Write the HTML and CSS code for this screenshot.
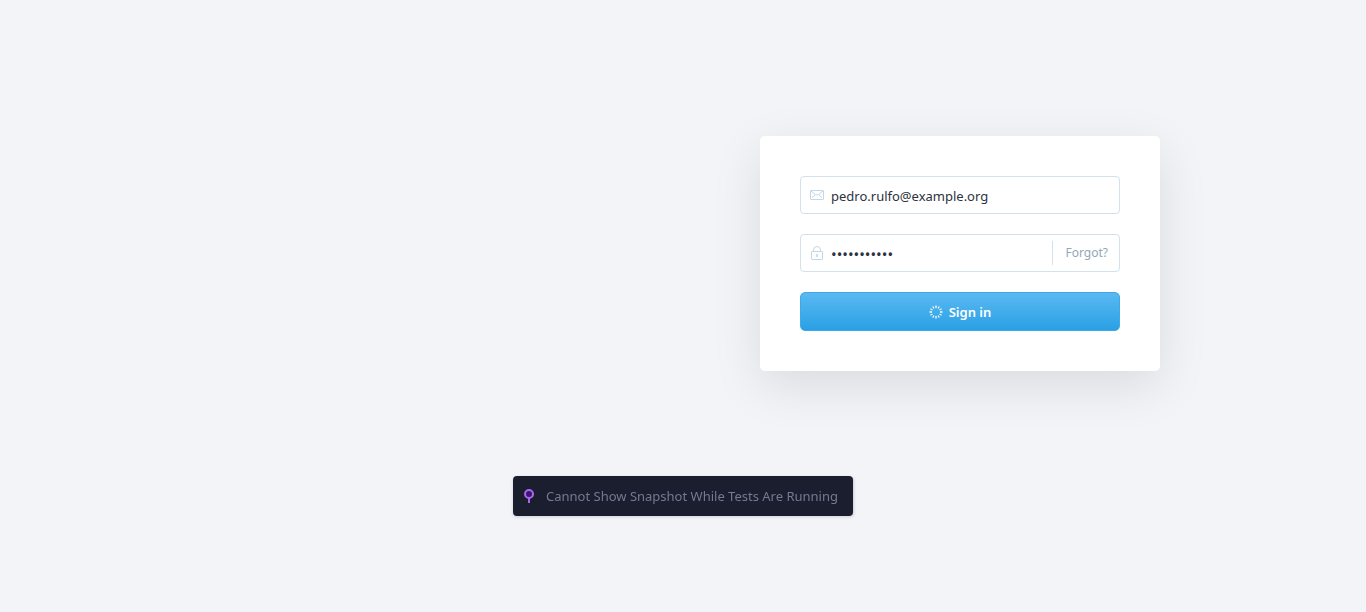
FILE: index.html
```html
<!DOCTYPE html>
<html lang="en">
<head>
<meta charset="utf-8">
<meta name="viewport" content="width=device-width, initial-scale=1">
<title>Sign in</title>
<link rel="stylesheet" href="styles.css">
</head>
<body>
<main class="page">
  <form class="card">
    <div class="field">
      <label class="field-icon" for="email" aria-label="Email">
        <svg width="14" height="14" viewBox="0 0 14 14" fill="none" stroke="currentColor">
          <rect x="0.5" y="2.5" width="13" height="9" rx="0.5"/>
          <path d="M1 3l4.5 3.6q1.5 1 3 0L13 3M2 9.5l3-2.5M12 9.5L9 7"/>
        </svg>
      </label>
      <input class="input" id="email" type="email" value="pedro.rulfo@example.org">
    </div>
    <div class="field">
      <label class="field-icon" for="password" aria-label="Password">
        <svg width="14" height="14" viewBox="0 0 14 14" fill="none" stroke="currentColor">
          <rect x="1.5" y="5.5" width="11" height="8" rx="0.5"/>
          <path d="M3.5 5.5V4a3.5 3.5 0 0 1 7 0v1.5"/>
          <path d="M7 8v3" stroke-width="1.6"/>
        </svg>
      </label>
      <input class="input input-password" id="password" type="password" value="password123">
      <a class="forgot" href="#forgot">Forgot?</a>
    </div>
    <button class="submit" type="submit">
      <svg width="14" height="14" viewBox="-7 -7 14 14" stroke="currentColor" stroke-width="1.3" aria-hidden="true">
        <path d="M0-6.5V-4M0 4V6.5M-6.5 0H-4M4 0H6.5"/>
        <path d="M0-6.5V-4M0 4V6.5M-6.5 0H-4M4 0H6.5" transform="rotate(30)" opacity="0.85"/>
        <path d="M0-6.5V-4M0 4V6.5M-6.5 0H-4M4 0H6.5" transform="rotate(60)" opacity="0.85"/>
      </svg>
      <span>Sign in</span>
    </button>
  </form>
</main>
<div class="toast" role="status">
  <svg width="10" height="14" viewBox="0 0 10 14" aria-hidden="true">
    <path d="M5 9v5" stroke="#a568ee" stroke-width="2"/>
    <circle cx="5" cy="5" r="4" fill="#3d1470" stroke="#a568ee" stroke-width="2"/>
  </svg>
  <span>Cannot Show Snapshot While Tests Are Running</span>
</div>
</body>
</html>
```
FILE: styles.css
```css
* {
  box-sizing: border-box;
}

body {
  min-height: 100vh;
  margin: 0;
  background: #f2f4f8;
  font-family: "Segoe UI", "Noto Sans", sans-serif;
  font-size: 13px;
}

.page {
  display: flex;
  align-items: flex-start;
  justify-content: flex-end;
  max-width: 954px;
  min-height: 100vh;
  margin: 0 auto;
  padding-top: 136px;
}

.card {
  display: flex;
  flex-direction: column;
  gap: 20px;
  width: 400px;
  padding: 40px;
  border-radius: 5px;
  background: #fff;
  box-shadow: 0 15px 50px rgba(0, 0, 0, 0.1);
}

.field {
  display: flex;
  align-items: center;
  height: 38px;
  padding: 0 11px 0 9px;
  border: 1px solid #d3e1ea;
  border-radius: 4px;
}

.field-icon {
  display: flex;
  color: #c3d7e4;
}

.input {
  flex: 1;
  min-width: 0;
  padding: 1px 0 0 7px;
  border: 0;
  outline: 0;
  background: none;
  color: #2b3340;
  font: inherit;
}

.input-password {
  font-size: 15px;
}

.forgot {
  padding-left: 12px;
  border-left: 1px solid #d3e1ea;
  color: #93a8b8;
  font-size: 12px;
  line-height: 24px;
  text-decoration: none;
}

.submit {
  display: flex;
  align-items: center;
  justify-content: center;
  gap: 6px;
  height: 39px;
  border: 1px solid #3fa9e8;
  border-radius: 5px;
  background: linear-gradient(#5ab9f2, #2aa0e4);
  color: #fff;
  font: inherit;
  font-weight: 600;
}

.toast {
  position: fixed;
  bottom: 96px;
  left: 50%;
  transform: translateX(-50%);
  display: flex;
  align-items: center;
  gap: 12px;
  height: 40px;
  padding: 0 15px 0 11px;
  border-radius: 4px;
  background: #1b1e2e;
  box-shadow: 0 1px 3px rgba(0, 0, 0, 0.15);
  color: #747994;
  white-space: nowrap;
}
```
